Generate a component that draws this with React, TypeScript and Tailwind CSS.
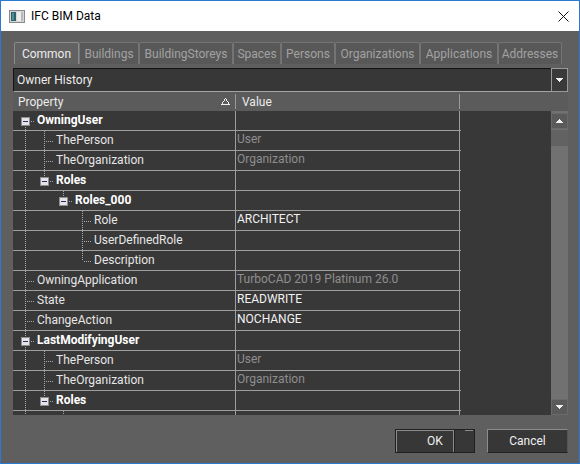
import React from "react";

type Guide = [number, "f" | "t" | "b"];

type Row = {
  label: string;
  level: number;
  bold?: boolean;
  box?: boolean;
  value?: string;
  dim?: boolean;
  guides: Guide[];
};

// last row is scrolled off, only its guide lines peek in
const rows: Row[] = [
  { label: "OwningUser", level: 0, bold: true, box: true, guides: [[0, "b"]] },
  { label: "ThePerson", level: 1, value: "User", dim: true, guides: [[0, "f"], [1, "f"]] },
  { label: "TheOrganization", level: 1, value: "Organization", dim: true, guides: [[0, "f"], [1, "f"]] },
  { label: "Roles", level: 1, bold: true, box: true, guides: [[0, "f"], [1, "t"]] },
  { label: "Roles_000", level: 2, bold: true, box: true, guides: [[0, "f"], [2, "t"]] },
  { label: "Role", level: 3, value: "ARCHITECT", guides: [[0, "f"], [3, "f"]] },
  { label: "UserDefinedRole", level: 3, guides: [[0, "f"], [3, "f"]] },
  { label: "Description", level: 3, guides: [[0, "f"], [3, "t"]] },
  { label: "OwningApplication", level: 0, value: "TurboCAD 2019 Platinum 26.0", dim: true, guides: [[0, "f"]] },
  { label: "State", level: 0, value: "READWRITE", guides: [[0, "f"]] },
  { label: "ChangeAction", level: 0, value: "NOCHANGE", guides: [[0, "f"]] },
  { label: "LastModifyingUser", level: 0, bold: true, box: true, guides: [[0, "f"]] },
  { label: "ThePerson", level: 1, value: "User", dim: true, guides: [[0, "f"], [1, "f"]] },
  { label: "TheOrganization", level: 1, value: "Organization", dim: true, guides: [[0, "f"], [1, "f"]] },
  { label: "Roles", level: 1, bold: true, box: true, guides: [[0, "f"], [1, "t"]] },
  { label: "", level: 2, bold: true, box: true, guides: [[0, "f"], [2, "t"]] },
];

const tabs = [
  { name: "Common", w: "w-[65px]" },
  { name: "Buildings", w: "w-[60px]" },
  { name: "BuildingStoreys", w: "w-[94px]" },
  { name: "Spaces", w: "w-[48px]" },
  { name: "Persons", w: "w-[54px]" },
  { name: "Organizations", w: "w-[85px]" },
  { name: "Applications", w: "w-[78px]" },
  { name: "Addresses", w: "w-[64px]" },
];

const indent = ["w-[24px]", "w-[43px]", "w-[62px]", "w-[81px]"];

function TreeGuides({ row }: { row: Row }) {
  const w = 24 + 19 * row.level;
  const gx = (l: number) => 12.5 + 19 * l;
  const o = 19 * row.level;
  return (
    <svg width={w} height={19} className={`flex-none ${indent[row.level]}`} shapeRendering="crispEdges">
      {row.guides.map(([l, k], i) => (
        <line
          key={i}
          x1={gx(l)}
          y1={k === "b" ? 10 : 0}
          x2={gx(l)}
          y2={k === "t" ? 10 : 19}
          stroke="#a8a8a8"
          strokeDasharray="1 1"
        />
      ))}
      <line
        x1={(row.box ? 18 : 14) + o}
        y1={10.5}
        x2={22 + o}
        y2={10.5}
        stroke="#a8a8a8"
        strokeDasharray="1 1"
      />
      {row.box && (
        <>
          <rect x={8.5 + o} y={6.5} width={8} height={8} fill="#e4e4e8" stroke="#8e8e8e" />
          <line x1={10 + o} y1={10.5} x2={15 + o} y2={10.5} stroke="#27305a" />
        </>
      )}
    </svg>
  );
}

function Arrow({ up }: { up?: boolean }) {
  return (
    <svg width="7" height="4" shapeRendering="crispEdges">
      {up ? (
        <path d="M3 0h1v1h1v1h1v1h1v1H0V3h1V2h1V1h1z" fill="#f2f2f2" />
      ) : (
        <path d="M0 0h7v1H6v1H5v1H4v1H3V3H2V2H1V1H0z" fill="#f2f2f2" />
      )}
    </svg>
  );
}

export default function App() {
  return (
    <div className="w-[580px] h-[464px] border border-[#2b79d0] bg-[#5f5f5f] flex flex-col font-[Roboto,sans-serif] text-[12px] overflow-hidden">
      {/* title bar */}
      <div className="h-[30px] bg-white flex items-center flex-none">
        <svg width="16" height="13" className="ml-[8px]" shapeRendering="crispEdges">
          <rect x="0.5" y="0.5" width="15" height="12" fill="#d6d6d6" stroke="#8a8a8a" />
          <rect x="2" y="2" width="5" height="9" fill="#2f6170" />
          <rect x="3" y="3" width="2" height="7" fill="#4f8f8f" />
          <rect x="8" y="2" width="6" height="9" fill="#eeeeee" />
          <rect x="12" y="2" width="2" height="9" fill="#b8b8b8" />
        </svg>
        <span className="ml-[6px] text-black">IFC BIM Data</span>
        <svg width="11" height="11" className="ml-auto mr-[10px]">
          <path d="M0.5 0.5L10.5 10.5M10.5 0.5L0.5 10.5" stroke="#111" strokeWidth="1" />
        </svg>
      </div>

      {/* body */}
      <div className="flex-1 flex flex-col pl-[12px] pr-[11px] pt-[11px]">
        {/* tabs */}
        <div className="flex h-[22px] pl-[1px]">
          {tabs.map((t, i) => (
            <div
              key={t.name}
              className={`${t.w} h-[22px] flex items-center justify-center rounded-t-[2px] border-t border-l border-r ${
                i === 0
                  ? "bg-[#626262] border-[#8c8c8c] text-[#ececec]"
                  : "bg-[#585858] border-[#747474] text-[#a2a2a2]"
              }`}
            >
              {t.name}
            </div>
          ))}
        </div>

        {/* combo */}
        <div className="mt-[4px] h-[24px] w-[555px] flex">
          <div className="flex-1 flex items-center bg-[#373737] border-t border-l border-[#141414] border-b-[#a4a4a4] border-b pl-[3px] text-[#ececec]">
            Owner History
          </div>
          <div className="w-[17px] flex items-center justify-center bg-[#3a3a3a] border border-[#9a9a9a]">
            <Arrow />
          </div>
        </div>

        {/* grid */}
        <div className="w-[555px] flex flex-col">
          <div className="h-[19px] flex items-center bg-[#5b5b5b] text-[#ececec]">
            <div className="w-[222px] pl-[5px] pr-[5px] flex items-center justify-between">
              <span>Property</span>
              <svg width="9" height="7" shapeRendering="crispEdges">
                <path d="M4.5 0.5L8.5 6.5H0.5Z" fill="none" stroke="#f0f0f0" />
              </svg>
            </div>
            <div className="w-px h-[15px] bg-[#9a9a9a]" />
            <div className="w-[223px] pl-[6px]">Value</div>
            <div className="w-px h-[15px] bg-[#9a9a9a]" />
          </div>

          <div className="h-[304px] flex bg-[#383838]">
            <div className="w-[448px] flex flex-col overflow-hidden">
              {rows.map((r, i) => (
                <div key={i} className="h-[20px] flex-none flex border-b border-[#9e9e9e]">
                  <div
                    className={`w-[223px] flex-none flex items-center border-r border-[#9e9e9e] whitespace-nowrap ${
                      r.bold ? "font-bold text-white" : "text-[#e6e6e6]"
                    }`}
                  >
                    <TreeGuides row={r} />
                    <span className="leading-[19px]">{r.label}</span>
                  </div>
                  <div
                    className={`w-[224px] flex-none flex items-center pl-[1px] pb-[3px] border-r border-[#9e9e9e] whitespace-nowrap ${
                      r.dim ? "text-[#8e8e8e]" : "text-[#f2f2f2]"
                    }`}
                  >
                    {r.value}
                  </div>
                </div>
              ))}
            </div>
            <div className="flex-1" />
            {/* scrollbar */}
            <div className="w-[17px] flex flex-col bg-[#717171] pt-[2px]">
              <div className="h-[16px] flex items-center justify-center bg-[#5a5a5a] border border-[#6a6a6a]">
                <Arrow up />
              </div>
              <div className="mt-[1px] h-[16px] bg-[#626262]" />
              <div className="flex-1" />
              <div className="h-[16px] flex items-center justify-center bg-[#5a5a5a] border border-[#6a6a6a]">
                <Arrow />
              </div>
            </div>
          </div>
        </div>

        {/* buttons */}
        <div className="mt-[14px] flex justify-end gap-[12px]">
          <div className="w-[80px] h-[24px] relative flex border border-[#202020] bg-[#373737] text-[#f0f0f0]">
            <div className="w-[58px] h-full border-t border-l border-r border-[#8c8c8c]" />
            <div className="flex-1 h-full border-l border-[#202020] flex justify-end">
              <div className="w-[8px] h-px bg-[#8c8c8c] mr-[1px]" />
            </div>
            <span className="absolute inset-0 flex items-center justify-center">OK</span>
          </div>
          <div className="w-[81px] h-[24px] flex items-center justify-center bg-[#373737] border-t border-l border-[#8c8c8c] border-b border-r border-b-[#222] border-r-[#555] text-[#f0f0f0]">
            Cancel
          </div>
        </div>
      </div>
    </div>
  );
}
